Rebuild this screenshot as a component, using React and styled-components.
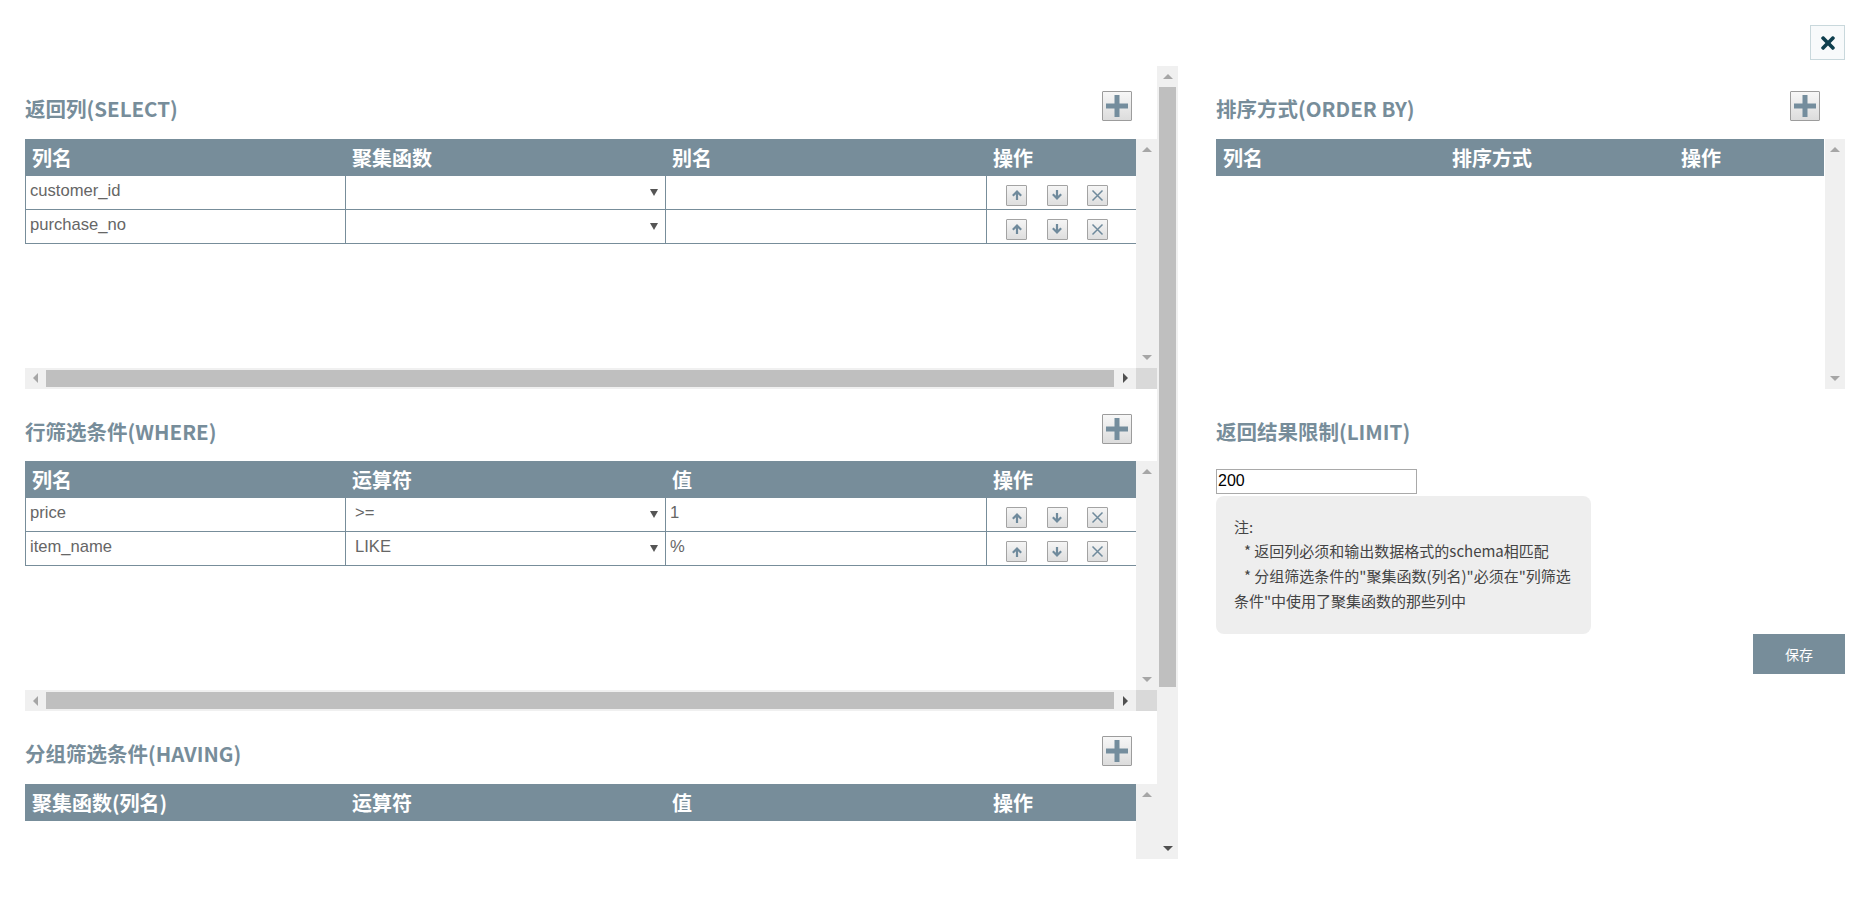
import styled, { createGlobalStyle } from 'styled-components';
import { FaTimes } from 'react-icons/fa';

const SLATE = '#778d9a';
const CJK = `"Noto Sans CJK SC", "Noto Sans", sans-serif`;

const GlobalStyle = createGlobalStyle`
  html, body {
    margin: 0;
    background: #fff;
  }
  * {
    box-sizing: border-box;
  }
`;

const Page = styled.div`
  width: 1861px;
  height: 898px;
  overflow: hidden;
  padding: 25px 16px 0 0;
  font-family: ${CJK};
`;

const TopBar = styled.div`
  display: flex;
  justify-content: flex-end;
  height: 41px;
`;

const CloseButton = styled.button`
  width: 35px;
  height: 35px;
  padding: 0;
  display: flex;
  align-items: center;
  justify-content: center;
  background: #f8fafb;
  border: 1px solid #c9d8dc;
  color: #0f3f4e;
  font-size: 20px;
`;

const Body = styled.div`
  display: flex;
`;

const LeftPane = styled.div`
  display: flex;
  width: 1178px;
  height: 793px;
  flex: none;
`;

const LeftContent = styled.div`
  width: 1157px;
  height: 793px;
  overflow: hidden;
  padding: 0.25px 0 0 25px;
`;

const RightPane = styled.div`
  width: 629px;
  margin-left: 38px;
  flex: none;
`;

const TitleRow = styled.div`
  display: flex;
  align-items: flex-end;
  justify-content: space-between;
  height: 72.5px;
  padding: 0 25px 17.5px 0;
  margin-bottom: ${(p) => p.$gap || 0}px;
`;

const Title = styled.h3`
  margin: 0;
  font-size: 20.5px;
  line-height: 26px;
  font-weight: 700;
  color: ${SLATE};
`;

const PlusButton = styled.button`
  width: 30px;
  height: 30px;
  padding: 0;
  display: flex;
  align-items: center;
  justify-content: center;
  background: linear-gradient(#f7f7f7, #dcdcdc);
  border: 1px solid #9c9c9c;
  border-radius: 1px;
`;

const TableArea = styled.div`
  display: flex;
  height: ${(p) => p.$height || 229}px;
`;

const TableClip = styled.div`
  flex: 1;
  min-width: 0;
  overflow: hidden;
`;

const Grid = styled.table`
  width: ${(p) => p.$width || 1111}px;
  table-layout: fixed;
  border-collapse: separate;
  border-spacing: 0;
`;

const HeadCell = styled.th`
  height: 37px;
  padding: 0 0 0 7px;
  background: ${SLATE};
  color: #fff;
  font-size: 20px;
  font-weight: 700;
  text-align: left;
  white-space: nowrap;
`;

const Cell = styled.td`
  position: relative;
  height: 34px;
  padding: 6px 0 0 4px;
  vertical-align: top;
  border-left: 1px solid ${SLATE};
  border-bottom: 1px solid ${SLATE};
  font-family: "Liberation Sans", Arial, sans-serif;
  font-size: 16.6px;
  line-height: 18px;
  color: #666;
`;

const SelectCell = styled(Cell)`
  padding-left: 9px;
  &::after {
    content: '';
    position: absolute;
    top: 13px;
    right: 7.5px;
    border-left: 4px solid transparent;
    border-right: 4px solid transparent;
    border-top: 7px solid #555;
  }
`;

const ActionCell = styled(Cell)`
  padding: 9px 0 0 19px;
`;

const Actions = styled.div`
  display: flex;
  gap: 19.5px;
`;

const RowButton = styled.button`
  width: 21px;
  height: 21px;
  padding: 0;
  display: flex;
  align-items: center;
  justify-content: center;
  background: linear-gradient(#f5f5f5, #dedede);
  border: 1px solid #a3a3a3;
  border-radius: 1px;
`;

const HBar = styled.div`
  display: flex;
  height: 21px;
`;

const HTrack = styled.div`
  flex: 1;
  display: flex;
  align-items: center;
  background: #f0f0f0;
`;

const HThumb = styled.div`
  flex: 1;
  height: 17px;
  background: #bfbfbf;
`;

const ArrowSlot = styled.div`
  width: ${(p) => p.$width || 21}px;
  height: 21px;
  flex: none;
  display: flex;
  align-items: center;
  justify-content: center;
`;

const Corner = styled.div`
  width: 21px;
  background: #d9d9d9;
`;

const VBar = styled.div`
  width: ${(p) => p.$width || 21}px;
  flex: none;
  display: flex;
  flex-direction: column;
  align-items: center;
  justify-content: space-between;
  background: #f0f0f0;
  margin-left: ${(p) => p.$offset || 0}px;
`;

const VThumb = styled.div`
  width: 17px;
  height: 600px;
  background: #bfbfbf;
  margin-bottom: auto;
`;

const Tri = styled.span`
  width: 0;
  height: 0;
  ${(p) => {
    const color = p.$on ? '#505050' : '#a6a6a6';
    if (p.$dir === 'up') return `border-left:5px solid transparent;border-right:5px solid transparent;border-bottom:5.5px solid ${color};`;
    if (p.$dir === 'down') return `border-left:5px solid transparent;border-right:5px solid transparent;border-top:5.5px solid ${color};`;
    if (p.$dir === 'left') return `border-top:5px solid transparent;border-bottom:5px solid transparent;border-right:5.5px solid ${color};`;
    return `border-top:5px solid transparent;border-bottom:5px solid transparent;border-left:5.5px solid ${color};`;
  }}
`;

const LimitBox = styled.div`
  width: 201px;
  height: 25px;
  margin-bottom: 2px;
  padding: 0 1px;
  border: 1px solid #a9a9a9;
  font-family: "Liberation Sans", Arial, sans-serif;
  font-size: 16px;
  line-height: 22px;
  color: #000;
`;

const Note = styled.div`
  width: 375px;
  height: 138px;
  padding: 19px 18px;
  background: #eee;
  border-radius: 8px;
  font-size: 15px;
  line-height: 24.8px;
  color: #444;
`;

const NoteLine = styled.div`
  text-indent: ${(p) => (p.$indent ? 10 : 0)}px;
`;

const SaveRow = styled.div`
  display: flex;
  justify-content: flex-end;
`;

const SaveButton = styled.button`
  width: 92px;
  height: 40px;
  border: 0;
  padding: 0;
  background: ${SLATE};
  color: #fff;
  font-family: ${CJK};
  font-size: 14px;
`;

const PlusIcon = () => (
  <svg width="24" height="24" viewBox="0 0 24 24">
    <path d="M9.5 1h5v8.5H23v5h-8.5V23h-5v-8.5H1v-5h8.5z" fill="#748d9d" />
  </svg>
);

const UpIcon = () => (
  <svg width="12" height="12" viewBox="0 0 11 11">
    <path d="M5.5 1 10 5.6 8.7 6.8 6.5 4.7V10h-2V4.7L2.3 6.8 1 5.6z" fill="#6f8a9c" />
  </svg>
);

const DownIcon = () => (
  <svg width="12" height="12" viewBox="0 0 11 11">
    <path d="M5.5 10 10 5.4 8.7 4.2 6.5 6.3V1h-2v5.3L2.3 4.2 1 5.4z" fill="#6f8a9c" />
  </svg>
);

const RemoveIcon = () => (
  <svg width="13" height="13" viewBox="0 0 13 13">
    <path d="M1.5 1.5l10 10M11.5 1.5l-10 10" stroke="#6f8a9c" strokeWidth="1.5" fill="none" />
  </svg>
);

const RowActions = () => (
  <ActionCell>
    <Actions>
      <RowButton><UpIcon /></RowButton>
      <RowButton><DownIcon /></RowButton>
      <RowButton><RemoveIcon /></RowButton>
    </Actions>
  </ActionCell>
);

const VScroll = ({ width, offset }) => (
  <VBar $width={width} $offset={offset}>
    <ArrowSlot><Tri $dir="up" /></ArrowSlot>
    <ArrowSlot><Tri $dir="down" /></ArrowSlot>
  </VBar>
);

const HScroll = () => (
  <HBar>
    <HTrack>
      <ArrowSlot><Tri $dir="left" /></ArrowSlot>
      <HThumb />
      <ArrowSlot $width={22}><Tri $dir="right" $on /></ArrowSlot>
    </HTrack>
    <Corner />
  </HBar>
);

const widths = [320, 320, 321, 150];

const Section = ({ title, heads, rows = [] }) => (
  <section>
    <TitleRow>
      <Title>{title}</Title>
      <PlusButton><PlusIcon /></PlusButton>
    </TitleRow>
    <TableArea>
      <TableClip>
        <Grid>
          <colgroup>
            {widths.map((w, i) => <col key={i} width={w} />)}
          </colgroup>
          <thead>
            <tr>{heads.map((h) => <HeadCell key={h}>{h}</HeadCell>)}</tr>
          </thead>
          <tbody>
            {rows.map((r) => (
              <tr key={r[0]}>
                <Cell>{r[0]}</Cell>
                <SelectCell>{r[1]}</SelectCell>
                <Cell>{r[2]}</Cell>
                <RowActions />
              </tr>
            ))}
          </tbody>
        </Grid>
      </TableClip>
      <VScroll />
    </TableArea>
    <HScroll />
  </section>
);

export default function App() {
  return (
    <Page>
      <GlobalStyle />
      <TopBar>
        <CloseButton><FaTimes /></CloseButton>
      </TopBar>
      <Body>
        <LeftPane>
          <LeftContent>
            <Section
              title="返回列(SELECT)"
              heads={['列名', '聚集函数', '别名', '操作']}
              rows={[
                ['customer_id', '', ''],
                ['purchase_no', '', ''],
              ]}
            />
            <Section
              title="行筛选条件(WHERE)"
              heads={['列名', '运算符', '值', '操作']}
              rows={[
                ['price', '>=', '1'],
                ['item_name', 'LIKE', '%'],
              ]}
            />
            <Section
              title="分组筛选条件(HAVING)"
              heads={['聚集函数(列名)', '运算符', '值', '操作']}
            />
          </LeftContent>
          <VBar>
            <ArrowSlot><Tri $dir="up" /></ArrowSlot>
            <VThumb />
            <ArrowSlot><Tri $dir="down" $on /></ArrowSlot>
          </VBar>
        </LeftPane>
        <RightPane>
          <TitleRow>
            <Title>排序方式(ORDER BY)</Title>
            <PlusButton><PlusIcon /></PlusButton>
          </TitleRow>
          <TableArea $height={250}>
            <TableClip>
              <Grid $width={687}>
                <thead>
                  <tr>
                    <HeadCell>列名</HeadCell>
                    <HeadCell>排序方式</HeadCell>
                    <HeadCell>操作</HeadCell>
                  </tr>
                </thead>
              </Grid>
            </TableClip>
            <VScroll width={20} offset={1} />
          </TableArea>
          <TitleRow $gap={7.5}>
            <Title>返回结果限制(LIMIT)</Title>
          </TitleRow>
          <LimitBox>200</LimitBox>
          <Note>
            <NoteLine>注:</NoteLine>
            <NoteLine $indent>* 返回列必须和输出数据格式的schema相匹配</NoteLine>
            <NoteLine $indent>* 分组筛选条件的"聚集函数(列名)"必须在"列筛选条件"中使用了聚集函数的那些列中</NoteLine>
          </Note>
          <SaveRow>
            <SaveButton>保存</SaveButton>
          </SaveRow>
        </RightPane>
      </Body>
    </Page>
  );
}
